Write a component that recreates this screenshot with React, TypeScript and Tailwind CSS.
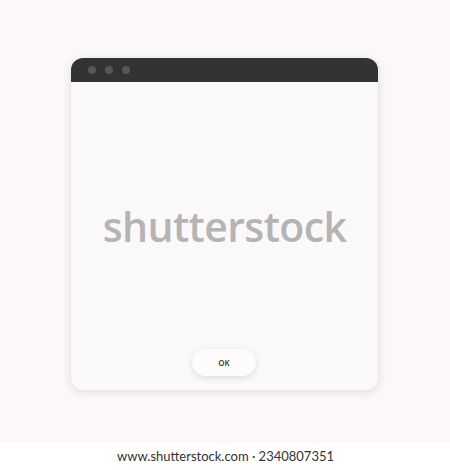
export default function App() {
  return (
    <div className="flex h-[470px] w-[450px] flex-col bg-white font-['Lato',sans-serif]">
      <div className="flex h-[443px] flex-col bg-[#fcf7f8] pl-[71px] pt-[58px]">
        {/* dialog window */}
        <div className="flex h-[332px] w-[307px] flex-col overflow-hidden rounded-[12px] bg-[#fbf8f9] shadow-[0_2px_10px_rgba(0,0,0,0.12)]">
          <div className="flex h-[24px] items-center gap-[9px] bg-[#333333] pl-[17px]">
            <span className="h-[8px] w-[8px] rounded-full bg-[#575757]" />
            <span className="h-[8px] w-[8px] rounded-full bg-[#575757]" />
            <span className="h-[8px] w-[8px] rounded-full bg-[#575757]" />
          </div>
          <div className="flex flex-1 flex-col items-center">
            <div className="mt-[124px] font-['Open_Sans',sans-serif] text-[41px] font-semibold leading-none tracking-[-0.6px] text-[#b5b3b4]">
              shutterstock
            </div>
            <div className="flex-1" />
            <button className="mb-[14px] ml-[-1px] flex h-[27px] w-[64px] items-center justify-center rounded-full bg-[#fdfbfc] font-['Open_Sans',sans-serif] text-[8px] font-semibold text-[#333] shadow-[0_2px_6px_rgba(0,0,0,0.12)]">
              OK
            </button>
          </div>
        </div>
      </div>
      <div className="flex flex-1 items-center justify-center pl-[1px] text-[13px] text-[#333]">
        www.shutterstock.com · 2340807351
      </div>
    </div>
  );
}
